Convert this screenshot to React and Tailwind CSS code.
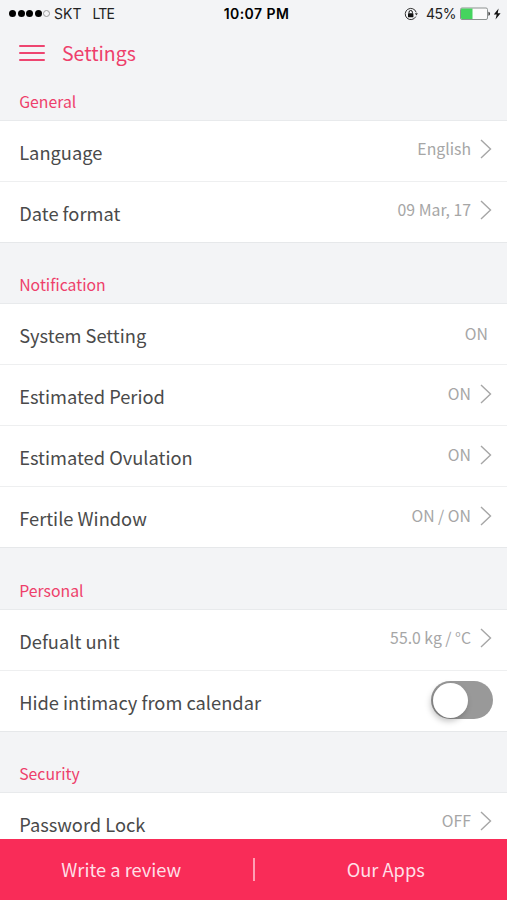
import React from 'react';

const sections = [
  {
    title: 'General',
    rows: [
      { label: 'Language', value: 'English' },
      { label: 'Date format', value: '09 Mar, 17' },
    ],
  },
  {
    title: 'Notification',
    rows: [
      { label: 'System Setting', value: 'ON', plain: true },
      { label: 'Estimated Period', value: 'ON' },
      { label: 'Estimated Ovulation', value: 'ON' },
      { label: 'Fertile Window', value: 'ON / ON' },
    ],
  },
  {
    title: 'Personal',
    rows: [
      { label: 'Defualt unit', value: '55.0 kg / °C' },
      { label: 'Hide intimacy from calendar', toggle: true },
    ],
  },
  {
    title: 'Security',
    rows: [{ label: 'Password Lock', value: 'OFF' }],
  },
];

const Chevron = () => (
  <svg className="ml-[9px] shrink-0" width="12" height="20" viewBox="0 0 12 20" fill="none">
    <path d="M1 1L10.5 10L1 19" stroke="#a6a6a6" strokeWidth="1.4" />
  </svg>
);

const LockIcon = () => (
  <svg width="14" height="14" viewBox="0 0 14 14" fill="none">
    <path d="M11.8 9.6A5.6 5.6 0 1 1 12.2 5.4" stroke="#333" strokeWidth="1" />
    <path d="M10.9 6.2h3l-1.5 2.3z" fill="#333" />
    <rect x="4" y="6.2" width="5.4" height="4" rx="0.5" fill="#111" />
    <path d="M5 6.4V5.2a1.7 1.7 0 0 1 3.4 0v1.2" stroke="#111" strokeWidth="1" />
  </svg>
);

const Battery = () => (
  <svg width="42" height="14" viewBox="0 0 42 14" fill="none">
    <rect x="0.5" y="1" width="27" height="11.5" rx="1.5" fill="#fbfbfb" stroke="#8d9291" />
    <path d="M2 1.4h10.5v10.7H2a1 1 0 0 1-1-1V2.4a1 1 0 0 1 1-1z" fill="#45d45e" />
    <path d="M28.4 4.8c2.2.2 2.2 3.8 0 4z" fill="#444" />
    <path d="M38.6 1.6L33.8 7.6h2.9L35.5 12.4l5.1-6.2h-2.9z" fill="#111" />
  </svg>
);

const StatusBar = () => (
  <div className="h-[27px] grid grid-cols-[1fr_auto_1fr] items-center pl-[9px] pr-[5px] font-['Inter',sans-serif] text-[14px] leading-none text-[#222]">
    <div className="flex items-center">
      <div className="flex gap-[1.6px] mr-[3.5px]">
        {[1, 2, 3, 4].map((n) => (
          <span key={n} className="size-[7px] rounded-full bg-black" />
        ))}
        <span className="size-[7px] rounded-full border border-[#999]" />
      </div>
      <span className="tracking-[0.1px]">SKT</span>
      <span className="ml-[11px] tracking-[-0.9px]">LTE</span>
    </div>
    <span className="pl-[2px] font-semibold tracking-[0.45px] text-black">10:07 PM</span>
    <div className="flex items-center justify-end">
      <LockIcon />
      <span className="ml-[8px] mr-[4px] tracking-[-0.4px]">45%</span>
      <Battery />
    </div>
  </div>
);

const Toggle = () => (
  <div className="w-[62px] h-[38px] mt-[-1px] mr-[-1px] rounded-full bg-[#999] p-[2px] pl-[1.5px] flex items-center">
    <div className="size-[35px] rounded-full bg-white shadow-[-2px_3px_6px_rgba(0,0,0,0.25)]" />
  </div>
);

const Row = ({ row }) => (
  <div className="h-[61.1px] shrink-0 flex items-center justify-between bg-white border-b border-[#eeeff0] last:border-[#e6e8ea] pl-[19.2px] pr-[15px]">
    <span className="text-[18.3px] leading-[30px] mt-[2px] text-[#4a4a4a]">{row.label}</span>
    {row.toggle ? (
      <Toggle />
    ) : (
      <div className={row.plain ? 'flex items-center pr-1' : 'flex items-center mt-[-3px]'}>
        <span className="text-[15.8px] leading-[26px] text-[#a6a6a6]">{row.value}</span>
        {!row.plain && <Chevron />}
      </div>
    )}
  </div>
);

const App = () => (
  <div className="h-[900px] w-full flex flex-col overflow-hidden bg-[#f3f4f6] font-['Noto_Sans_CJK_KR',sans-serif]">
    <StatusBar />

    {/* Title bar */}
    <div className="h-[51px] shrink-0 flex items-center pl-[19px]">
      <div className="w-[26px] flex flex-col gap-[5px]">
        <span className="h-[2px] bg-[#ee4570] rounded-full" />
        <span className="h-[2px] bg-[#ee4570] rounded-full" />
        <span className="h-[2px] bg-[#ee4570] rounded-full" />
      </div>
      <h1 className="ml-[17px] mt-[1px] text-[19.5px] leading-[30px] text-[#ee3f6b]">Settings</h1>
    </div>

    {/* Settings list */}
    <div className="h-[761px] shrink-0 overflow-hidden flex flex-col">
      {sections.map((section, i) => (
        <section key={section.title} className="shrink-0 flex flex-col">
          <h2
            className={`${i === 0 ? 'h-[42.8px]' : 'h-[61.1px]'} shrink-0 flex items-end pb-[5px] pl-[19.2px] border-b border-[#e8eaec] text-[15.8px] leading-[26px] text-[#ee3f6b]`}
          >
            {section.title}
          </h2>
          {section.rows.map((row) => (
            <Row key={row.label} row={row} />
          ))}
        </section>
      ))}
    </div>

    {/* Footer actions */}
    <div className="h-[61px] shrink-0 flex items-center bg-[#f92c58] text-[18.3px] leading-[28px] text-[#ffdfe6]">
      <button className="flex-1 pr-[10px] pb-[1px]">Write a review</button>
      <span className="w-[2px] h-[23px] bg-[#ff9fb4]" />
      <button className="flex-1 pl-[10px] pb-[1px]">Our Apps</button>
    </div>
  </div>
);

export default App;
